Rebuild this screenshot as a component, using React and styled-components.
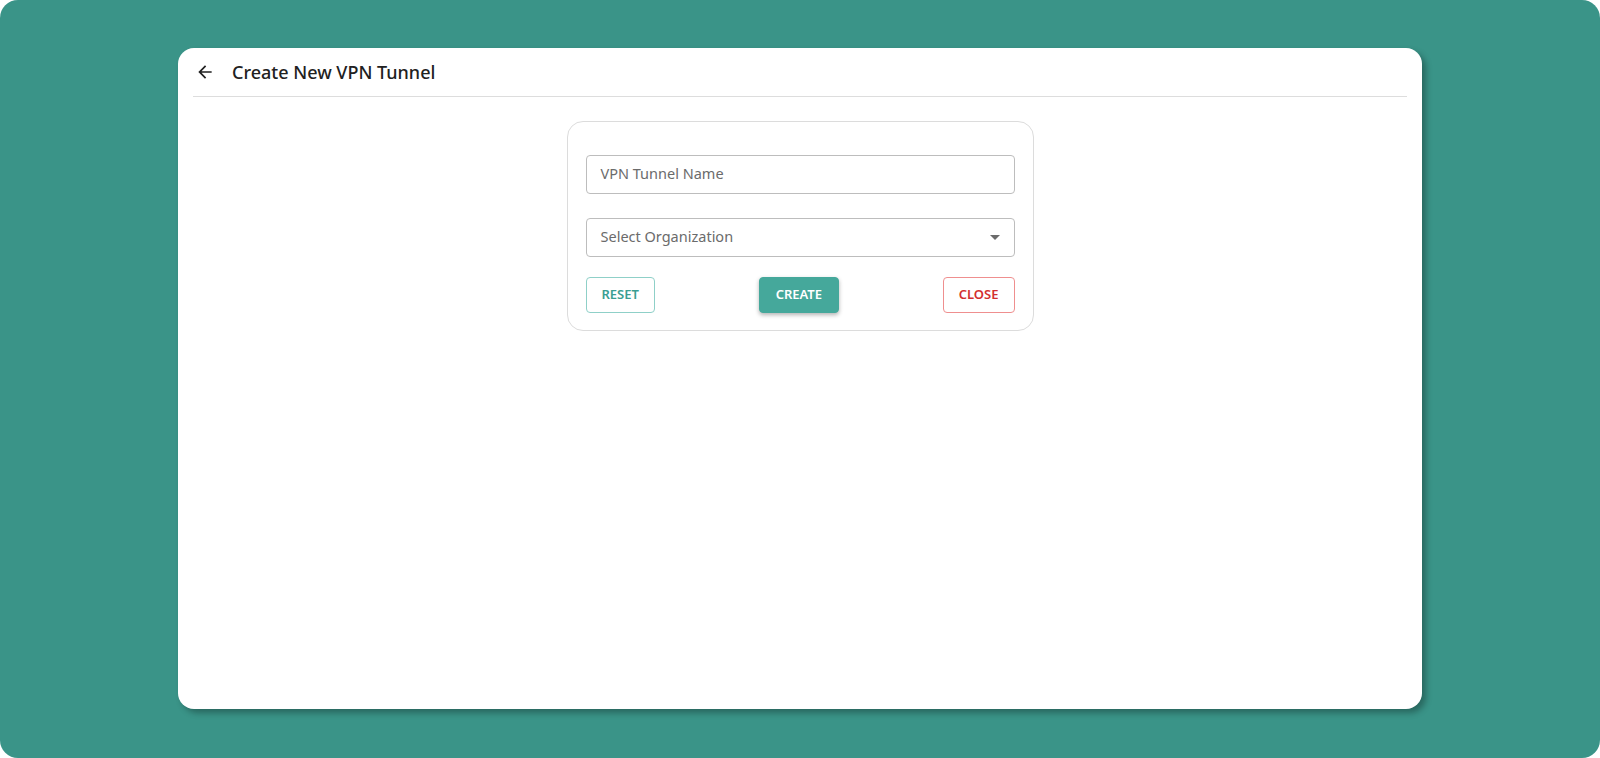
import React from 'react';
import styled, { createGlobalStyle } from 'styled-components';

const GlobalStyle = createGlobalStyle`
  * {
    box-sizing: border-box;
  }

  body {
    margin: 0;
    background: #ffffff;
    font-family: "Noto Sans", "Open Sans", sans-serif;
  }
`;

const Screen = styled.div`
  height: 758px;
  padding: 48px 178px 49px;
  background-color: #3a9488;
  border-radius: 18px;
`;

const Panel = styled.section`
  height: 100%;
  background-color: #ffffff;
  border-radius: 16px;
  box-shadow: 4px 4px 6px rgba(0, 0, 0, 0.3);
  padding: 0 15px;
`;

Panel.Header = styled.header`
  display: flex;
  align-items: center;
  height: 49px;
  border-bottom: 1px solid #dddddd;
  padding-left: 1px;

  h1 {
    margin: 0;
    font-size: 18px;
    font-weight: 500;
    color: #212121;
  }
`;

const BackButton = styled.button`
  display: flex;
  align-items: center;
  justify-content: center;
  width: 22px;
  height: 22px;
  padding: 0;
  margin-right: 16px;
  border: none;
  background: none;
  color: #212121;
  cursor: pointer;
`;

Panel.Body = styled.div`
  display: flex;
  justify-content: center;
  padding-top: 24px;
`;

const Form = styled.form`
  width: 467px;
  display: flex;
  flex-direction: column;
  gap: 24px;
  padding: 33px 18px 17px;
  border: 1px solid #dcdcdc;
  border-radius: 16px;
`;

const Field = styled.div`
  position: relative;
  height: 39px;
  border: 1px solid #bdbdbd;
  border-radius: 4px;
  display: flex;
  align-items: center;
  padding: 0 14px 4px;
  font-size: 14.5px;
  color: #6b6b6b;
`;

const Caret = styled.span`
  position: absolute;
  right: 14px;
  top: 16px;
  width: 0;
  height: 0;
  border-left: 5px solid transparent;
  border-right: 5px solid transparent;
  border-top: 5px solid #6b6b6b;
`;

const Actions = styled.div`
  display: flex;
  justify-content: space-between;
  align-items: center;
  margin-top: -4px;
`;

const tones = {
  reset: { color: '#3a9e92', border: '#8fd0c8', bg: '#ffffff' },
  create: { color: '#ffffff', border: '#45a89b', bg: '#45a89b' },
  close: { color: '#d32f2f', border: '#ef8f8f', bg: '#ffffff' },
};

const Button = styled.button`
  height: 36px;
  padding: 0 ${({ $tone }) => ($tone === 'create' ? '16px' : '15px')} 3px;
  font-family: "Noto Sans", sans-serif;
  font-size: 13px;
  font-weight: 600;
  color: ${({ $tone }) => tones[$tone].color};
  background-color: ${({ $tone }) => tones[$tone].bg};
  border: 1px solid ${({ $tone }) => tones[$tone].border};
  border-radius: 4px;
  box-shadow: ${({ $tone }) => ($tone === 'create' ? '0 2px 4px rgba(0, 0, 0, 0.3)' : 'none')};
  cursor: pointer;
`;

const ArrowBack = () => (
  <svg width="20" height="20" viewBox="0 0 24 24" fill="currentColor">
    <path d="M20 11H7.83l5.59-5.59L12 4l-8 8 8 8 1.41-1.41L7.83 13H20v-2z" />
  </svg>
);

const App = () => {
  return (
    <>
      <GlobalStyle />
      <Screen>
        <Panel>
          <Panel.Header>
            <BackButton type="button" aria-label="Back">
              <ArrowBack />
            </BackButton>
            <h1>Create New VPN Tunnel</h1>
          </Panel.Header>
          <Panel.Body>
            <Form onSubmit={(e) => e.preventDefault()}>
              <Field>VPN Tunnel Name</Field>
              <Field>
                Select Organization
                <Caret />
              </Field>
              <Actions>
                <Button type="button" $tone="reset">RESET</Button>
                <Button type="submit" $tone="create">CREATE</Button>
                <Button type="button" $tone="close">CLOSE</Button>
              </Actions>
            </Form>
          </Panel.Body>
        </Panel>
      </Screen>
    </>
  );
};

export default App;
